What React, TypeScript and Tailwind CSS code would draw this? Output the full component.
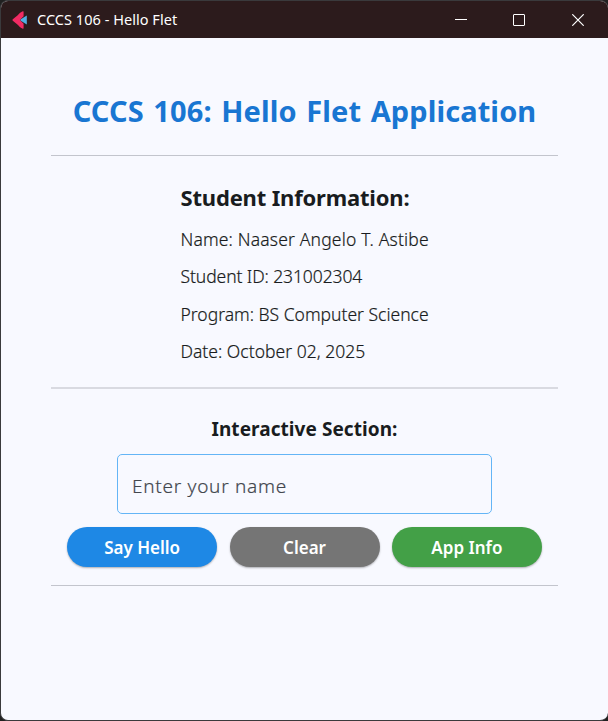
const details = [
  { text: 'Name: Naaser Angelo T. Astibe', tracking: 'tracking-[0.170px]' },
  { text: 'Student ID: 231002304', tracking: 'tracking-[-0.090px]' },
  { text: 'Program: BS Computer Science', tracking: 'tracking-[0px]' },
  { text: 'Date: October 02, 2025', tracking: 'tracking-[0.020px]' },
];

const buttons = [
  { label: 'Say Hello', color: 'bg-[#1e88e5]' },
  { label: 'Clear', color: 'bg-[#757575]' },
  { label: 'App Info', color: 'bg-[#43a047]' },
];

function TitleBar() {
  return (
    <header className="flex h-[37px] shrink-0 items-center bg-[#2c1b1c] pl-[11px] text-white">
      <svg width="16" height="18" viewBox="0 0 16 18" className="shrink-0">
        <path d="M10.800 0.200L11.600 0.400V5.200L8.600 8.200Q8 9 8.600 9.800L11.600 12.800V17.600L10.800 17.800C8.800 17 7.400 15.800 6 14L0.800 9.800Q0 9 0.800 8.200L6 4C7.400 2.200 8.800 1 10.800 0.200Z" fill="#f02b63" />
        <path d="M14.800 4.500v9L8.800 9.700Q8.200 9 8.800 8.300Z" fill="#51aee2" />
      </svg>
      <span className="mb-[2px] ml-[9px] text-[14.500px] leading-[20px] tracking-[0.040px]">CCCS 106 - Hello Flet</span>
      <svg width="12" height="12" viewBox="0 0 12 12" className="ml-auto shrink-0" fill="none" stroke="currentColor">
        <path d="M0 5.500h12" />
      </svg>
      <svg width="12" height="12" viewBox="0 0 12 12" className="ml-[46px] shrink-0" fill="none" stroke="currentColor">
        <rect x="0.500" y="0.500" width="11" height="11" rx="0.500" />
      </svg>
      <svg width="12" height="12" viewBox="0 0 12 12" className="mr-[24px] ml-[47px] shrink-0" fill="none" stroke="currentColor" strokeWidth="1.200">
        <path d="M0.300 0.300l11.400 11.400M11.700 0.300L0.300 11.700" />
      </svg>
    </header>
  );
}

function Divider({ className = 'h-[1px] bg-[#c3c5cd]' }: { className?: string }) {
  return <hr className={`w-full shrink-0 border-0 ${className}`} />;
}

export default function App() {
  return (
    <div className="h-[721px] w-[608px] overflow-hidden bg-[#202020] font-['Noto_Sans','Open_Sans',sans-serif]">
      <div className="flex h-full flex-col overflow-hidden rounded-[8px] border border-r-0 border-[#3a3a3c] bg-[#f8f9ff]">
        <TitleBar />
        <main className="flex flex-1 flex-col items-center px-[50px] text-[#191c20]">
          <h1 className="mt-[53px] h-[40px] text-[29px] leading-[40px] font-bold tracking-[0.090px] whitespace-nowrap text-[#1976d2] [word-spacing:2px]">
            CCCS 106: Hello Flet Application
          </h1>
          <div className="mt-[24px] w-full"><Divider /></div>
          <section className="mt-[26px] w-[248px] whitespace-nowrap">
            <h2 className="h-[30px] text-[22px] leading-[30px] font-bold tracking-[-0.180px]">Student Information:</h2>
            <div className="mt-[15px] flex flex-col gap-[13.400px]">
              {details.map((d) => (
                <p key={d.text} className={`h-[24px] text-[17.500px] leading-[24px] font-light text-[#191c20] [-webkit-text-stroke:0.200px_#191c20] ${d.tracking}`}>{d.text}</p>
              ))}
            </div>
          </section>
          <div className="mt-[23.800px] w-full"><Divider className="h-[2px] bg-[#d9dae1]" /></div>
          <h3 className="mt-[27px] h-[26px] text-[19px] leading-[26px] font-bold tracking-[0.060px] whitespace-nowrap">Interactive Section:</h3>
          <div className="mt-[12.500px] h-[60px] w-[375px] shrink-0 rounded-[5px] border border-[#64b5f6]">
            <input
              type="text"
              placeholder="Enter your name"
              className="h-full w-full bg-transparent px-[14px] pt-[4px] text-[19px] font-light tracking-[0.720px] outline-none [-webkit-text-stroke:0.200px_#42474e] placeholder:text-[#42474e]"
            />
          </div>
          <div className="mt-[12.700px] flex gap-[12.400px]">
            {buttons.map((b) => (
              <button key={b.label} className={`h-[40px] w-[150px] rounded-full pt-[2px] text-[17px] font-semibold text-white shadow-[0_1px_2px_rgba(0,0,0,0.3)] ${b.color}`}>
                {b.label}
              </button>
            ))}
          </div>
          <div className="mt-[18px] w-full"><Divider /></div>
        </main>
      </div>
    </div>
  );
}
